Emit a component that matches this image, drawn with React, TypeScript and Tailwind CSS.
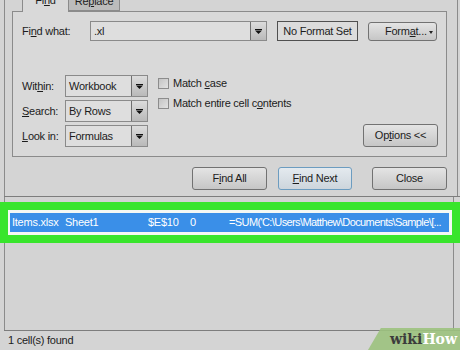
import React from "react";

function Arrow() {
  return (
    <svg width="7" height="5" viewBox="0 0 7 5">
      <rect x="0" y="0" width="7" height="1" fill="#111" />
      <path d="M0 1.5 L7 1.5 L3.5 5 Z" fill="#111" />
    </svg>
  );
}

function Combo({ text, w }: { text: string; w: string }) {
  return (
    <div className={`h-[22px] ${w} border border-[#8a8a8a] bg-[#dedede] flex items-stretch`}>
      <span className="flex-1 pl-[3px] flex items-center">{text}</span>
      <div className="w-[16px] border-l border-[#6f6f6f] bg-linear-to-b from-[#dcdcdc] to-[#b9b9b9] flex items-center justify-center">
        <Arrow />
      </div>
    </div>
  );
}

function Btn({ children, w, extra }: { children: React.ReactNode; w: string; extra?: string }) {
  return (
    <div
      className={`h-[23px] ${w} rounded-[3px] border ${
        extra ?? "border-[#727272] bg-linear-to-b from-[#e4e4e4] to-[#c6c6c6]"
      } flex items-center justify-center shrink-0`}
    >
      {children}
    </div>
  );
}

function Check({ children }: { children: React.ReactNode }) {
  return (
    <div className="flex items-center h-[12px]">
      <div className="w-[11px] h-[11px] border border-[#8c8c8c] bg-linear-to-br from-[#c4c4c4] to-[#e2e2e2]" />
      <span className="ml-[4px]">{children}</span>
    </div>
  );
}

export default function App() {
  return (
    <div className="w-[460px] h-[350px] bg-[#d4d4d4] flex flex-col overflow-hidden relative font-['Liberation_Sans',sans-serif] text-[11px] tracking-[-0.25px] text-[#1c1c1c]">
      {/* top dialog */}
      <div className="h-[196px] ml-[4px] mr-[2px] border-l border-r border-[#8b8b8b] flex flex-col shrink-0">
        {/* tabs */}
        <div className="h-[11px] flex items-start pl-[17px] relative z-10 shrink-0">
          <div className="w-[47px] h-[12px] bg-[#d9d9d9] border-x border-[#8b8b8b] flex justify-center overflow-hidden">
            <span className="leading-none -mt-[5px]">
              Fi<u>n</u>d
            </span>
          </div>
          <div className="w-[51px] h-[11px] bg-[#bcbcbc] border border-t-0 border-l-0 border-[#8b8b8b] flex justify-center overflow-hidden">
            <span className="leading-none -mt-[4px]">
              Re<u>p</u>lace
            </span>
          </div>
        </div>
        {/* panel */}
        <div className="ml-[7px] mr-[10px] h-[146px] border border-[#8b8b8b] bg-[#d9d9d9] flex flex-col shrink-0">
          <div className="mt-[9px] h-[20px] flex items-center pl-[9px]">
            <span className="w-[68px]">
              Fi<u>n</u>d what:
            </span>
            <div className="w-[177px] h-[20px] border border-[#8a8a8a] bg-[#dedede] flex items-stretch">
              <span className="flex-1 pl-[3px] flex items-center">.xl</span>
              <div className="w-[16px] border-l border-[#6f6f6f] bg-linear-to-b from-[#dcdcdc] to-[#b9b9b9] flex items-center justify-center">
                <Arrow />
              </div>
            </div>
            <div className="ml-[10px] w-[81px] h-[20px] border border-[#505050] bg-[#dcdcdc] flex items-center justify-center">
              No Format Set
            </div>
            <div className="ml-[10px] w-[69px] h-[19px] rounded-[3px] border border-[#727272] bg-linear-to-b from-[#e4e4e4] to-[#c6c6c6] flex items-center relative">
              <span className="ml-[16px]">
                Form<u>a</u>t...
              </span>
              <svg className="absolute right-[3px] top-[8px]" width="4" height="3" viewBox="0 0 4 3">
                <path d="M0 0 L4 0 L2 3 Z" fill="#222" />
              </svg>
            </div>
          </div>
          <div className="mt-[34px] flex pl-[9px] pr-[8px]">
            <div className="flex flex-col gap-[3px]">
              <div className="flex items-center">
                <span className="w-[43px]">
                  Wit<u>h</u>in:
                </span>
                <Combo text="Workbook" w="w-[83px]" />
              </div>
              <div className="flex items-center">
                <span className="w-[43px]">
                  <u>S</u>earch:
                </span>
                <Combo text="By Rows" w="w-[83px]" />
              </div>
              <div className="flex items-center">
                <span className="w-[43px]">
                  <u>L</u>ook in:
                </span>
                <Combo text="Formulas" w="w-[83px]" />
              </div>
            </div>
            <div className="ml-[10px] mt-[2px] flex flex-col gap-[8px]">
              <Check>
                Match <u>c</u>ase
              </Check>
              <Check>
                Match entire cell c<u>o</u>ntents
              </Check>
            </div>
            <div className="flex-1 flex justify-end items-end">
              <Btn w="w-[75px]">
                Op<u>t</u>ions &lt;&lt;
              </Btn>
            </div>
          </div>
        </div>
        {/* buttons */}
        <div className="mt-[10px] flex justify-end pr-[10px]">
          <Btn w="w-[75px]">
            F<u>i</u>nd All
          </Btn>
          <Btn w="w-[74px] ml-[11px]" extra="border-[#6c9cc0] bg-linear-to-b from-[#e4eaef] to-[#cdd5dc]">
            <u>F</u>ind Next
          </Btn>
          <Btn w="w-[75px] ml-[20px]">Close</Btn>
        </div>
      </div>
      <div className="h-px ml-[4px] bg-[#7d7d7d] shrink-0" />
      {/* results */}
      <div className="flex-1 ml-[4px] mr-[6px] border-l border-r border-[#8b8b8b] bg-[#d3d3d3] flex flex-col">
        <div className="mt-[5px] -ml-[5px] -mr-[7px] bg-[#38e52c] p-[8px]">
          <div className="bg-[#f4f8f4] pl-[2px] pr-[3px] py-[3px]">
            <div className="h-[19px] bg-[#3a8fe8] text-white flex items-center whitespace-nowrap overflow-hidden">
              <span className="w-[55px] shrink-0 pl-[2px]">Items.xlsx</span>
              <span className="w-[83px] shrink-0">Sheet1</span>
              <span className="w-[42px] shrink-0">$E$10</span>
              <span className="w-[39px] shrink-0">0</span>
              <span className="shrink-0 tracking-[-0.6px]">=SUM('C:\Users\Matthew\Documents\Sample\[...</span>
            </div>
          </div>
        </div>
      </div>
      {/* status */}
      <div className="h-[20px] border-t border-[#7d7d7d] ml-[4px] flex items-center pl-[4px] shrink-0">
        1 cell(s) found
      </div>
      {/* watermark */}
      <div className="absolute right-0 bottom-0 w-[92px] h-[22px] bg-[#9cc27e]/90 [clip-path:polygon(14%_0,100%_0,100%_100%,0_100%)] flex items-center justify-end pr-[3px] font-['DejaVu_Serif',serif] font-bold text-[14px] tracking-normal">
        <span className="text-[#3c3c3c]">wiki</span>
        <span className="text-white">How</span>
      </div>
    </div>
  );
}
